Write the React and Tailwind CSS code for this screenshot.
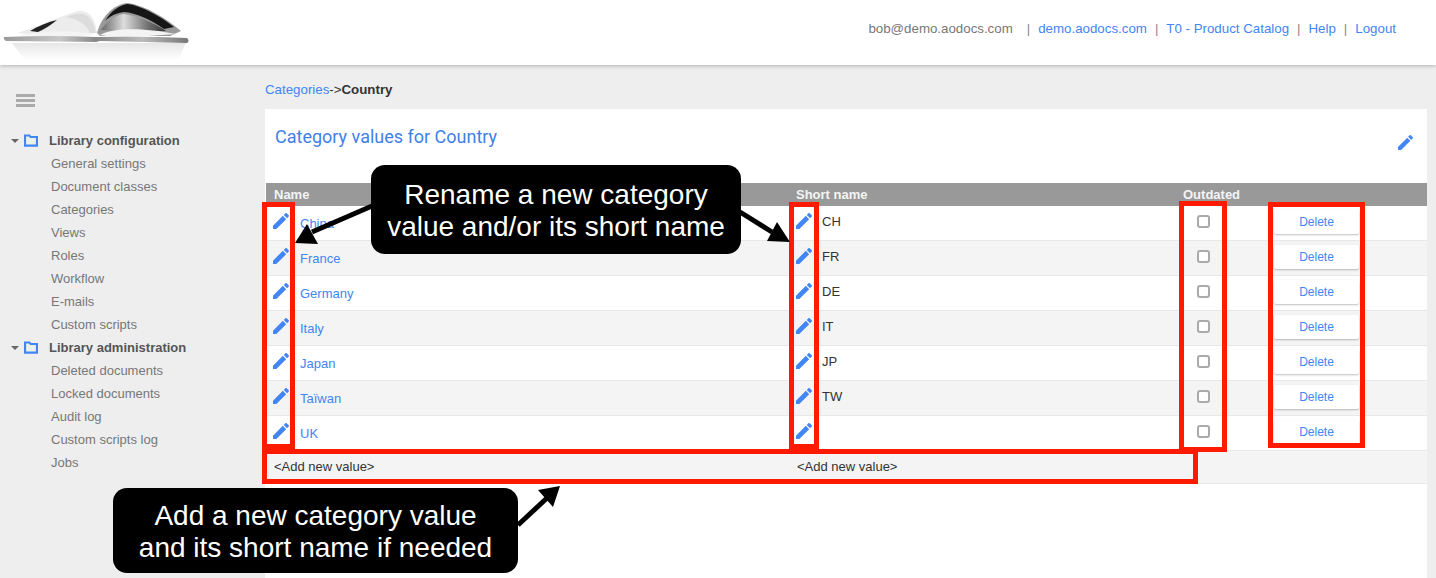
import React from "react";

const BLUE = "text-[#4285f4]";

const configItems = ["General settings", "Document classes", "Categories", "Views", "Roles", "Workflow", "E-mails", "Custom scripts"];
const adminItems = ["Deleted documents", "Locked documents", "Audit log", "Custom scripts log", "Jobs"];
const rows = [
    { name: "China", short: "CH" },
    { name: "France", short: "FR" },
    { name: "Germany", short: "DE" },
    { name: "Italy", short: "IT" },
    { name: "Japan", short: "JP" },
    { name: "Taïwan", short: "TW" },
    { name: "UK", short: "" },
];

const Pencil = ({ className }) => (
    <svg viewBox="3 3 18 18" className={className} fill="#4285f4">
        <path d="M3 17.25V21h3.75L17.81 9.94l-3.75-3.75L3 17.25zM20.71 7.04c.39-.39.39-1.02 0-1.41l-2.34-2.34c-.39-.39-1.02-.39-1.41 0l-1.83 1.83 3.75 3.75 1.83-1.83z" />
    </svg>
);

const Logo = () => (
    <svg viewBox="0 0 192 65" className="w-[192px] h-[65px]">
        <defs>
            <filter id="soft"><feGaussianBlur stdDeviation="0.5" /></filter>
            <linearGradient id="base" x1="0" y1="0" x2="1" y2="0">
                <stop offset="0" stopColor="#999" />
                <stop offset="0.3" stopColor="#c8c8c8" />
                <stop offset="0.5" stopColor="#888" />
                <stop offset="0.75" stopColor="#bbb" />
                <stop offset="1" stopColor="#777" />
            </linearGradient>
            <linearGradient id="shade" x1="0" y1="0" x2="0" y2="1">
                <stop offset="0" stopColor="#e0e0e0" />
                <stop offset="1" stopColor="#fff" />
            </linearGradient>
            <linearGradient id="ridge" x1="0" y1="0" x2="1" y2="0">
                <stop offset="0" stopColor="#666" />
                <stop offset="0.35" stopColor="#ddd" />
                <stop offset="0.7" stopColor="#777" />
                <stop offset="1" stopColor="#333" />
            </linearGradient>
        </defs>
        <g filter="url(#soft)">
            <path d="M12 43 L186 43 L178 60 L25 60 Z" fill="url(#shade)" opacity="0.8" />
            <path d="M17 33 C35 28 58 17 78 11 C90 10 95 18 97 33 L60 37 Z" fill="#ececec" />
            <path d="M66 17 C74 13 84 12 90 18 C93 23 95 28 96 33 L90 33 C86 24 78 19 66 17 Z" fill="#dcdcdc" />
            <path d="M30 31 C38 26 48 22 57 20 C51 25 45 29 38 32 Z" fill="#222" />
            <path d="M97 33 C101 18 112 5 127 3 C146 5 168 20 181 31 L170 36 L100 36 Z" fill="#9a9a9a" />
            <path d="M105 21 C111 11 119 5 128 4 C142 6 160 16 174 27 L164 29 C150 19 136 13 124 12 C116 13 110 16 105 21 Z" fill="#151515" />
            <path d="M101 30 C107 21 115 15 124 14 C138 16 152 22 166 31 L130 31 Z" fill="url(#ridge)" />
            <path d="M100 35 C112 28 140 27 176 34 L120 38 Z" fill="#f4f4f4" />
            <path d="M20 35 C45 31 75 29 95 35 L60 37 Z" fill="#f4f4f4" />
            <path d="M4 37 Q50 35 96 37 Q145 36 187 38 Q190 41 187 43 L100 41 L96 42 L6 41 Q3 39 4 37 Z" fill="url(#base)" />
        </g>
    </svg>
);

const Tree = ({ title, items }) => (
    <div>
        <div className="flex items-center h-[23px]">
            <span className="w-0 h-0 ml-[11px] mr-[5px] border-x-[4px] border-x-transparent border-t-[4px] border-t-[#666]" />
            <svg viewBox="0 0 16 14" className="w-[14px] h-[13px]" fill="none" stroke="#4285f4" strokeWidth="2.4">
                <path d="M1.2 3V1.2h5L7.5 3H14.8v9.8H1.2Z" />
            </svg>
            <span className="ml-[11px] font-bold text-[#555]">{title}</span>
        </div>
        {items.map((item) => (
            <div key={item} className="h-[23px] leading-[23px] pl-[51px] text-[#777]">{item}</div>
        ))}
    </div>
);

const Row = ({ row, even }) => (
    <div className={`grid grid-cols-[530px_387px_91px_153px] h-[35px] items-center border-b border-[#e8e8e8] ${even ? "bg-[#f4f4f4]" : "bg-white"}`}>
        <div className="flex items-center">
            <Pencil className="w-[16px] h-[16px] ml-[7px] mb-[5px]" />
            <span className={`ml-[11px] mt-[2px] ${BLUE}`}>{row.name}</span>
        </div>
        <div className="flex items-center">
            <Pencil className="w-[16px] h-[16px] mb-[5px]" />
            <span className="ml-[10px] mb-[2px] text-[#333]">{row.short}</span>
        </div>
        <div className="pl-[14px]">
            <div className="w-[13px] h-[13px] mb-[4px] bg-white border-2 border-[#aaa] rounded-[3px]" />
        </div>
        <div>
            <button className={`block w-[85px] h-[24px] mb-[2px] rounded-[2px] bg-white shadow-[0_1px_2px_rgba(0,0,0,0.25)] text-[12px] ${BLUE}`}>Delete</button>
        </div>
    </div>
);

export default function App() {
    return (
        <div className="relative w-[1436px] h-[578px] overflow-hidden bg-[#eeeeee] text-[13px] font-['Liberation_Sans',Arial,sans-serif]">
            <header className="relative z-10 flex items-center justify-between h-[65px] pr-[40px] bg-white shadow-[0_1px_4px_rgba(0,0,0,0.25)]">
                <Logo />
                <nav className="flex items-center mb-[7px] text-[13.3px]">
                    <span className="text-[#777]">bob@demo.aodocs.com</span>
                    <span className="ml-[14px] text-[#888]">|</span>
                    <a className={`ml-[8px] ${BLUE}`}>demo.aodocs.com</a>
                    <span className="ml-[8px] text-[#888]">|</span>
                    <a className={`ml-[8px] ${BLUE}`}>T0 - Product Catalog</a>
                    <span className="ml-[8px] text-[#888]">|</span>
                    <a className={`ml-[8px] ${BLUE}`}>Help</a>
                    <span className="ml-[8px] text-[#888]">|</span>
                    <a className={`ml-[8px] ${BLUE}`}>Logout</a>
                </nav>
            </header>

            <div className="flex h-[513px]">
                <aside className="w-[265px] shrink-0">
                    <div className="flex flex-col gap-[2px] w-[19px] ml-[16px] mt-[29px]">
                        <span className="h-[3px] bg-[#aaa]" />
                        <span className="h-[3px] bg-[#aaa]" />
                        <span className="h-[3px] bg-[#aaa]" />
                    </div>
                    <div className="mt-[22px]">
                        <Tree title="Library configuration" items={configItems} />
                        <Tree title="Library administration" items={adminItems} />
                    </div>
                </aside>

                <main className="flex flex-col w-[1162px]">
                    <div className="h-[44px] pt-[17px] leading-[15px] text-[13.3px]">
                        <span className={BLUE}>Categories</span>
                        <span className="text-[#333]">-&gt;</span>
                        <span className="font-bold text-[#333]">Country</span>
                    </div>
                    <section className="flex-1 bg-white">
                        <div className="flex items-start justify-between h-[74px] pl-[10px] pr-[14px]">
                            <h1 className="mt-[17px] text-[18px] leading-[22px] text-[#3f7fe8] font-['Roboto',sans-serif]">Category values for Country</h1>
                            <Pencil className="w-[15px] h-[15px] mt-[26px]" />
                        </div>
                        <div className="ml-px">
                            <div className="grid grid-cols-[530px_387px_91px_153px] h-[23px] items-center bg-[#999999] font-bold text-[#f4f4f4]">
                                <span className="pl-[8px]">Name</span>
                                <span>Short name</span>
                                <span className="col-span-2">Outdated</span>
                            </div>
                            {rows.map((row, i) => (
                                <Row key={row.name} row={row} even={i % 2 === 1} />
                            ))}
                            <div className="grid grid-cols-[530px_631px] h-[33px] items-center border-b border-[#e8e8e8] bg-[#f4f4f4] text-[#333]">
                                <span className="pl-[8px]">&lt;Add new value&gt;</span>
                                <span className="pl-px">&lt;Add new value&gt;</span>
                            </div>
                        </div>
                    </section>
                </main>
            </div>

            {/* Annotations drawn over the screenshot */}
            <div className="absolute z-20 left-[262px] top-[202px] w-[33px] h-[247px] border-[5px] border-[#ff1a00]" />
            <div className="absolute z-20 left-[789px] top-[202px] w-[30px] h-[247px] border-[5px] border-[#ff1a00]" />
            <div className="absolute z-20 left-[1179px] top-[201px] w-[48px] h-[251px] border-[5px] border-[#ff1a00]" />
            <div className="absolute z-20 left-[1268px] top-[202px] w-[97px] h-[246px] border-[5px] border-[#ff1a00]" />
            <div className="absolute z-20 left-[262px] top-[449px] w-[936px] h-[35px] border-[5px] border-[#ff1a00]" />

            <svg className="absolute z-20 left-0 top-0 w-[1436px] h-[578px] pointer-events-none" viewBox="0 0 1436 578">
                <path d="M372 206 L312 232" stroke="#000" strokeWidth="5" />
                <path d="M295 243 L307 224 L318 244 Z" fill="#000" />
                <path d="M740 212 L772 232" stroke="#000" strokeWidth="5" />
                <path d="M790 242 L767 241 L777 222 Z" fill="#000" />
                <path d="M518 525 L547 498" stroke="#000" strokeWidth="5" />
                <path d="M560 486 L538 490 L553 507 Z" fill="#000" />
            </svg>

            <div className="absolute z-30 left-[371px] top-[165px] flex items-center justify-center w-[370px] h-[89px] pt-[2px] rounded-[14px] bg-black text-center text-[28px] leading-[32px] text-white">
                <p>Rename a new category<br />value and/or its short name</p>
            </div>
            <div className="absolute z-30 left-[113px] top-[488px] flex items-center justify-center w-[405px] h-[85px] pt-[3px] rounded-[14px] bg-black text-center text-[28px] leading-[32px] text-white">
                <p>Add a new category value<br />and its short name if needed</p>
            </div>
        </div>
    );
}
